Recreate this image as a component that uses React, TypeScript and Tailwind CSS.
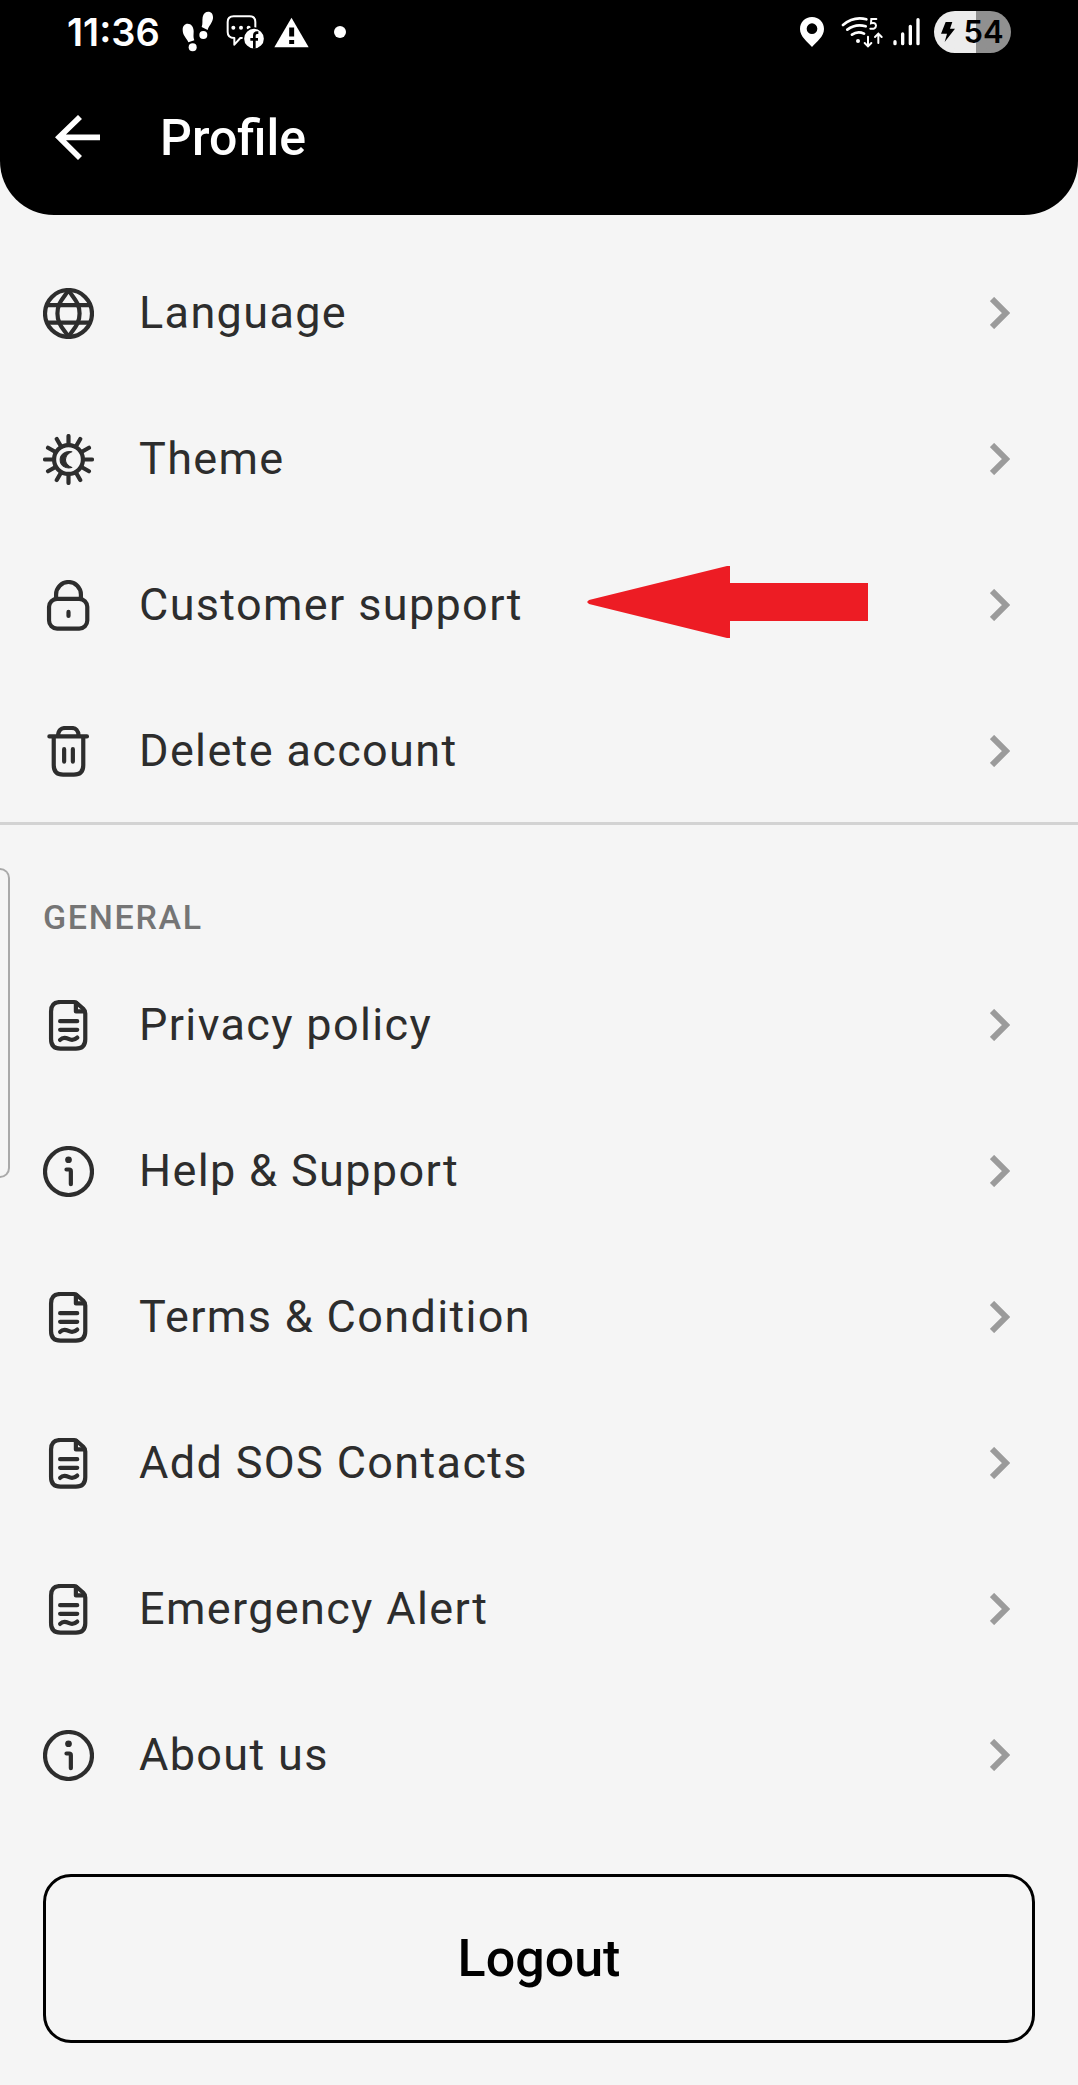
import type { ReactNode } from "react";

function GlobeIcon() {
  return (
    <>
      <circle cx="76" cy="76" r="70" />
      <path d="M15 51H137M15 103H137" />
      <path d="M76 6C62 30 43 42 43 76S62 122 76 146C90 122 109 110 109 76S90 30 76 6Z" />
    </>
  );
}

function ThemeIcon() {
  return (
    <>
      <circle cx="76" cy="76" r="43" />
      <path d="M76 30V6M76 122V146M30 76H6M122 76H146M99 36L111 15M53 36L41 15M99 116L111 137M53 116L41 137M116 99L137 111M36 99L15 111M116 53L137 41M36 53L15 41" />
      <path
        d="M86 53C66 49 51 61 51 77S66 105 86 100C73 95 67 87 67 77S73 58 86 53Z"
        fill="currentColor"
        strokeWidth="3"
      />
    </>
  );
}

function LockIcon() {
  return (
    <>
      <rect x="18" y="56" width="114" height="89" rx="24" />
      <path d="M39 54V43A37 37 0 0 1 113 43V54M76 95V107" />
    </>
  );
}

function TrashIcon() {
  return (
    <>
      <path d="M19 31H131M32 31V117Q32 145 60 145H92Q120 145 120 117V31" />
      <path d="M45 29C45 13 55 6 66 6H86C97 6 106 13 106 29M63 69V106M89 69V106" />
    </>
  );
}

function DocumentIcon() {
  return (
    <>
      <path d="M52 6H90Q98 6 104 12L120 26Q126 32 126 40V117Q126 145 98 145H52Q24 145 24 117V34Q24 6 52 6Z" />
      <path d="M98 8V34H124M51 63H102M51 89H102M51 119C60 109 68 112 76 116S94 119 102 112" />
    </>
  );
}

function InfoIcon() {
  return (
    <>
      <circle cx="76" cy="76" r="70" />
      <circle cx="76" cy="41" r="10" fill="currentColor" stroke="none" />
      <path d="M70 70H78Q83 70 83 75V114" />
    </>
  );
}

const accountItems = [
  { label: "Language", icon: <GlobeIcon /> },
  { label: "Theme", icon: <ThemeIcon /> },
  { label: "Customer support", icon: <LockIcon />, marked: true },
  { label: "Delete account", icon: <TrashIcon /> },
];

const generalItems = [
  { label: "Privacy policy", icon: <DocumentIcon /> },
  { label: "Help & Support", icon: <InfoIcon /> },
  { label: "Terms & Condition", icon: <DocumentIcon /> },
  { label: "Add SOS Contacts", icon: <DocumentIcon /> },
  { label: "Emergency Alert", icon: <DocumentIcon /> },
  { label: "About us", icon: <InfoIcon /> },
];

function MenuRow({ label, icon, marked }: { label: string; icon: ReactNode; marked?: boolean }) {
  return (
    <li className="relative">
      <a href="#" className="flex h-[100px] items-center pl-[43px] pr-[68px] text-[#2d2d2d]">
        <svg
          viewBox="0 0 152 152"
          className="mr-[45px] size-[51px] shrink-0"
          fill="none"
          stroke="currentColor"
          strokeWidth="12.5"
          strokeLinecap="round"
          strokeLinejoin="round"
        >
          {icon}
        </svg>
        <span className="flex-1 text-[45px] leading-[52px] tracking-[0.03em]">{label}</span>
        <svg viewBox="0 0 20 32" className="h-8 w-5 shrink-0" fill="none" stroke="#9b9b9b" strokeWidth="6">
          <path d="M2 2L16 16L2 30" />
        </svg>
      </a>
      {marked && (
        <svg viewBox="0 0 281 72" className="absolute left-[587px] top-[11px] h-[72px] w-[281px]" fill="#ed1c24">
          <path d="M0 36L2 34L140 0H143V17H281V55H143V72H140L2 38Z" />
        </svg>
      )}
    </li>
  );
}

function StatusBar() {
  return (
    <div className="flex h-16 items-center justify-between px-[67px]">
      <div className="flex items-center">
        <span className="font-[Inter] text-[38px] font-semibold leading-10">11:36</span>
        <svg viewBox="0 0 102 126" className="ml-[21px] h-[42px] w-[34px]" fill="#fff">
          <path d="M20 38C31 38 38 48 38 61C38 72 36 79 40 88L22 94C19 83 5 75 5 56C5 45 11 38 20 38Z" />
          <circle cx="35" cy="109" r="12" />
          <path d="M84 2C76 1 67 6 65 18C63 30 66 37 62 48L80 57C83 45 94 37 96 22C97 11 92 3 84 2Z" />
          <circle cx="67" cy="72" r="12" />
        </svg>
        <svg viewBox="0 0 120 108" className="ml-[10px] h-9 w-10" fill="none">
          <path
            d="M26 7H74Q91 7 91 24V52Q91 72 74 72H46L28 92V72Q8 72 8 54V24Q8 7 26 7Z"
            stroke="#fff"
            strokeWidth="6"
            strokeLinejoin="round"
          />
          <g fill="#fff">
            <circle cx="25" cy="41" r="6" />
            <circle cx="48" cy="41" r="6" />
            <circle cx="71" cy="41" r="6" />
          </g>
          <circle cx="87" cy="74" r="32" fill="#fff" stroke="#000" strokeWidth="5" />
          <path d="M100 56H96Q88 56 88 65V104M76 76H99" stroke="#000" strokeWidth="8" />
        </svg>
        <svg viewBox="0 0 106 92" className="ml-[9px] h-[31px] w-[35px]">
          <path d="M53 1L105 91H1Z" fill="#fff" />
          <path d="M46 31H61V58H46ZM46 69H61V81H46Z" fill="#000" />
        </svg>
        <span className="ml-[25px] size-3 rounded-full bg-white" />
      </div>

      <div className="flex items-center">
        <svg viewBox="0 0 72 90" className="h-[30px] w-6" fill="#fff" fillRule="evenodd">
          <path d="M36 0C15 0 0 15 0 36C0 59 22 74 36 90C50 74 72 59 72 36C72 15 57 0 36 0ZM36 19A16 16 0 1 1 36 51A16 16 0 1 1 36 19Z" />
        </svg>
        <svg viewBox="0 0 129 96" className="ml-[17px] h-8 w-[43px]" fill="none" stroke="#fff" strokeWidth="8" strokeLinecap="round">
          <path d="M6 27Q38 0 76 10M19 41Q44 22 74 31M33 56Q50 44 69 53" />
          <circle cx="51" cy="75" r="6" fill="#fff" stroke="none" />
          <path d="M106 9H91L90 22Q104 18 105 29Q104 41 88 38" strokeWidth="6" />
          <path d="M81 62V89M71 81L81 91L91 81M112 81V54M102 63L112 53L122 63" strokeWidth="6" />
        </svg>
        <svg viewBox="0 0 81 90" className="ml-[9px] h-[30px] w-[27px]" stroke="#fff" strokeWidth="10" strokeLinecap="round">
          <path d="M6 74V80M29 51V80M52 28V80M75 8V80" />
        </svg>
        <div className="ml-[14px] flex h-[42px] w-[77px] items-center justify-center rounded-full bg-linear-to-r from-[#ececec] from-54% to-[#909090] to-54% text-black">
          <svg viewBox="0 0 42 60" className="mr-2 h-5 w-[14px]" fill="#000">
            <path d="M14 0H34L27 20H42L11 60L18 35H0Z" />
          </svg>
          <span className="font-[Inter] text-[31px] font-semibold leading-8">54</span>
        </div>
      </div>
    </div>
  );
}

export default function App() {
  return (
    <div className="relative min-h-screen bg-[#f5f5f5] pb-[42px] font-[Roboto,sans-serif]">
      <header className="rounded-b-[54px] bg-black pb-1 text-white">
        <StatusBar />
        <div className="flex h-[147px] items-center pl-[55px]">
          <button type="button" aria-label="Back" className="mr-[60px]">
            <svg viewBox="0 0 135 135" className="size-[45px]" fill="none" stroke="#fff" strokeWidth="17">
              <path d="M75 6L12 67L75 129M12 67H135" />
            </svg>
          </button>
          <h1 className="text-[50px] font-medium leading-[60px]">Profile</h1>
        </div>
      </header>

      {/* edge panel handle */}
      <div className="absolute left-0 top-[868px] h-[310px] w-[10px] rounded-r-[10px] border-2 border-l-0 border-[#a9a9a9]" />

      <main>
        <ul className="flex flex-col gap-[46px] pb-[21px] pt-12">
          {accountItems.map((item) => (
            <MenuRow key={item.label} {...item} />
          ))}
        </ul>

        <section className="border-t-[3px] border-[#d3d3d3] pt-[72px]">
          <h2 className="mb-[38px] pl-[43px] text-[34px] font-medium leading-10 tracking-wider text-[#757575]">GENERAL</h2>
          <ul className="flex flex-col gap-[46px]">
            {generalItems.map((item) => (
              <MenuRow key={item.label} {...item} />
            ))}
          </ul>
        </section>

        <div className="px-[43px] pt-[69px]">
          <button
            type="button"
            className="h-[169px] w-full rounded-[28px] border-[3px] border-black text-[52px] font-medium leading-[60px] text-black"
          >
            Logout
          </button>
        </div>
      </main>
    </div>
  );
}
